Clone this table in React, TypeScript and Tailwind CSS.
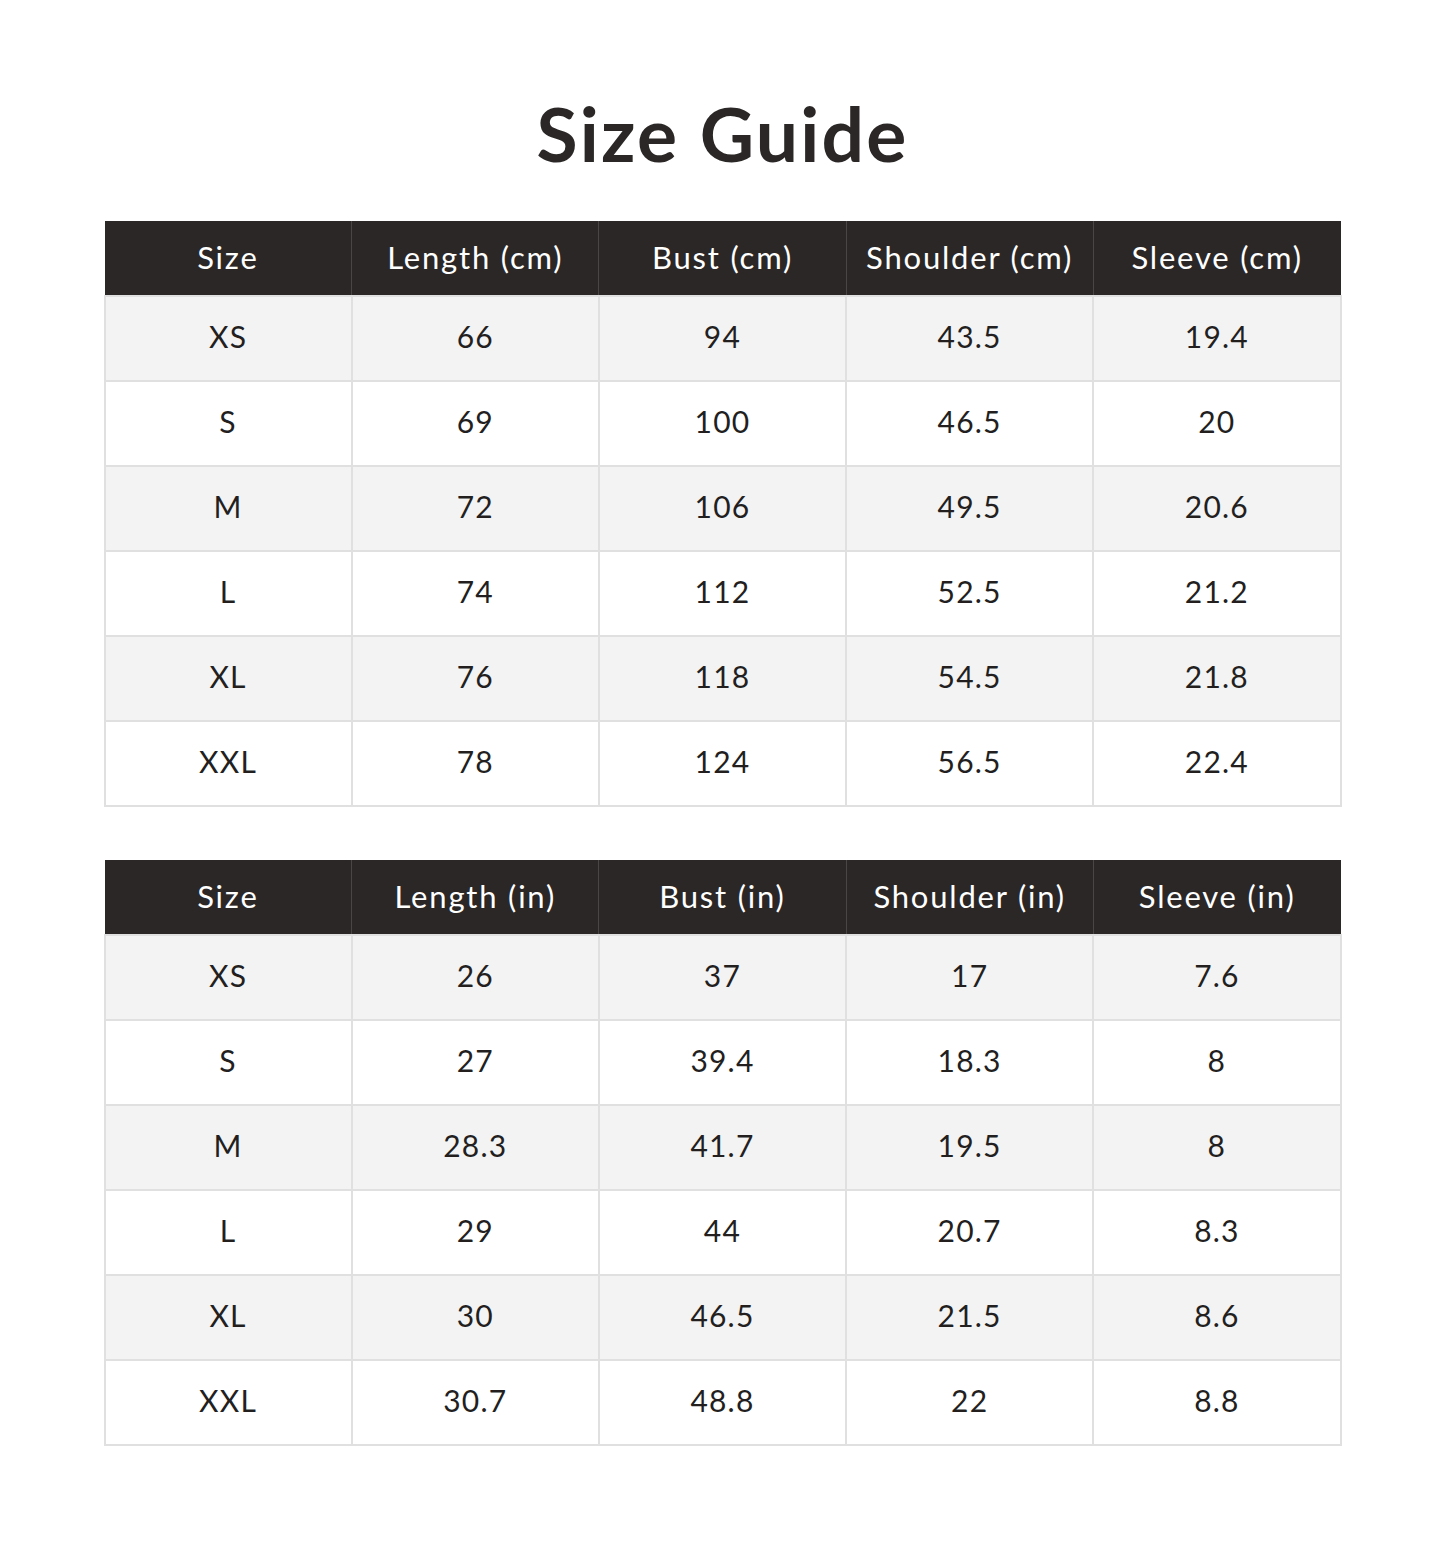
import React from "react";

const cm = {
  headers: ["Size", "Length (cm)", "Bust (cm)", "Shoulder (cm)", "Sleeve (cm)"],
  rows: [
    ["XS", "66", "94", "43.5", "19.4"],
    ["S", "69", "100", "46.5", "20"],
    ["M", "72", "106", "49.5", "20.6"],
    ["L", "74", "112", "52.5", "21.2"],
    ["XL", "76", "118", "54.5", "21.8"],
    ["XXL", "78", "124", "56.5", "22.4"],
  ],
};

const inch = {
  headers: ["Size", "Length (in)", "Bust (in)", "Shoulder (in)", "Sleeve (in)"],
  rows: [
    ["XS", "26", "37", "17", "7.6"],
    ["S", "27", "39.4", "18.3", "8"],
    ["M", "28.3", "41.7", "19.5", "8"],
    ["L", "29", "44", "20.7", "8.3"],
    ["XL", "30", "46.5", "21.5", "8.6"],
    ["XXL", "30.7", "48.8", "22", "8.8"],
  ],
};

function SizeTable({ data }: { data: { headers: string[]; rows: string[][] } }) {
  return (
    <table className="w-[1238px] border-collapse table-fixed">
      <thead>
        <tr className="bg-[#2b2727] h-[75px]">
          {data.headers.map((h, i) => (
            <th
              key={h}
              className={`text-white font-normal text-[31px] tracking-[1.8px] pb-[2px] ${i > 0 ? "border-l border-l-[#4a4646]" : ""}`}
            >
              {h}
            </th>
          ))}
        </tr>
      </thead>
      <tbody>
        {data.rows.map((r, ri) => (
          <tr key={ri} className={`h-[85px] ${ri % 2 === 0 ? "bg-[#f3f3f3]" : "bg-white"}`}>
            {r.map((c, ci) => (
              <td
                key={ci}
                className="border-2 border-[#e0e0e0] text-center text-[#231f1f] text-[30px] tracking-[1.2px] pb-[4px]"
              >
                {c}
              </td>
            ))}
          </tr>
        ))}
      </tbody>
    </table>
  );
}

export default function App() {
  return (
    <div
      className="w-[1445px] h-[1549px] bg-white flex flex-col items-center pt-[92px]"
      style={{ fontFamily: "Lato, 'Open Sans', sans-serif" }}
    >
      <h1 className="text-[#2b2727] text-[75px] font-bold leading-[82px] tracking-[2.2px]">Size Guide</h1>
      <div className="mt-[47px] flex flex-col gap-[53px]">
        <SizeTable data={cm} />
        <SizeTable data={inch} />
      </div>
    </div>
  );
}
